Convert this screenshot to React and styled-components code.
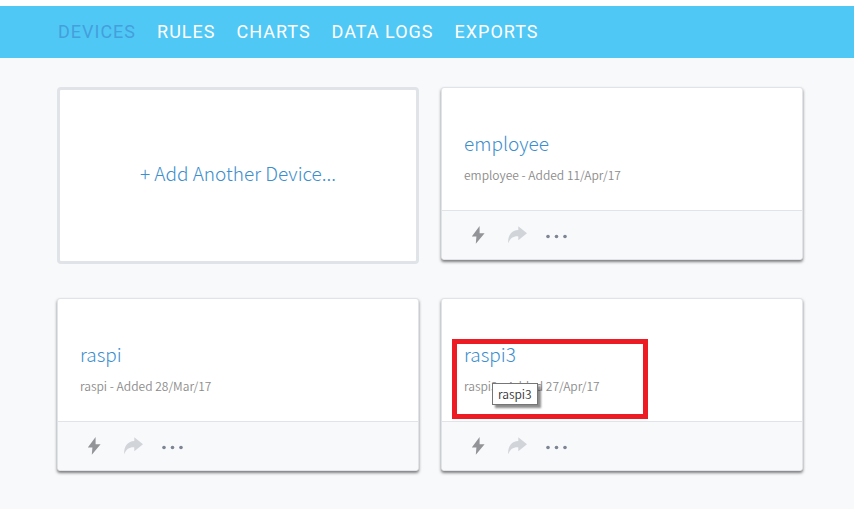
import React from 'react';
import styled, { createGlobalStyle } from 'styled-components';

const GlobalStyle = createGlobalStyle`
  * {
    box-sizing: border-box;
  }

  body {
    margin: 0;
    background: #f8f9fb;
    font-family: 'Noto Sans CJK JP', 'Noto Sans', sans-serif;
  }
`;

const Page = styled.div`
  border-top: 6px solid #fff;
`;

const NavBar = styled.nav`
  display: flex;
  align-items: center;
  gap: 21px;
  height: 52px;
  padding-left: 58px;
  background: #50c8f6;
`;

const NavLink = styled.a`
  color: ${({ $active }) => ($active ? '#449fdb' : '#fff')};
  font-family: Roboto, sans-serif;
  font-size: 18px;
  line-height: 24px;
  letter-spacing: 1px;
  text-decoration: none;
  white-space: nowrap;
`;

const DeviceGrid = styled.main`
  display: grid;
  grid-template-columns: 1fr 1fr;
  align-items: start;
  gap: 34px 22px;
  padding: 29px 51px 34px 57px;
`;

const AddCard = styled.button`
  height: 177px;
  padding: 0 0 6px;
  border: 3px solid #e0e3e7;
  border-radius: 4px;
  background: #fff;
  color: #3c8ecd;
  font-family: inherit;
  font-size: 19px;
  font-weight: 300;
  line-height: 28px;
  cursor: pointer;
`;

const Card = styled.article`
  border: 1px solid #e0e3e7;
  border-radius: 3px;
  background: #fff;
  box-shadow: 0 2px 3px rgba(0, 0, 0, 0.5);
`;

const CardBody = styled.div`
  position: relative;
  height: 122px;
  padding: 41px 22px 0;
`;

const DeviceName = styled.h2`
  margin: 0;
  font-size: 19px;
  font-weight: 300;
  line-height: 28px;
`;

const DeviceLink = styled.a`
  color: #3c8ecd;
  text-decoration: none;
`;

const DeviceInfo = styled.p`
  margin: 8px 0 0;
  color: #8c8c8c;
  font-size: 12px;
  font-weight: 350;
  line-height: 20px;
`;

const CardFooter = styled.div`
  display: flex;
  align-items: center;
  gap: 18px;
  height: 49px;
  padding-left: 25px;
  border-top: 1px solid #e0e3e7;
  border-radius: 0 0 3px 3px;
  background: #f8f9fb;
`;

const IconButton = styled.button`
  display: flex;
  padding: 0;
  border: 0;
  background: none;
  color: ${({ $color }) => $color};
  cursor: pointer;
`;

const Highlight = styled.div`
  position: absolute;
  top: 40px;
  left: 10px;
  width: 196px;
  height: 80px;
  border: 5px solid #ed1c24;
`;

const Tooltip = styled.div`
  position: absolute;
  top: 84px;
  left: 50px;
  padding: 0 5px;
  border: 1px solid #767676;
  background: #fff;
  box-shadow: 3px 3px 2px rgba(0, 0, 0, 0.45);
  color: #333;
  font-size: 12px;
  font-weight: 350;
  line-height: 20px;
`;

const BoltIcon = () => (
  <svg width="22" height="20" viewBox="0 0 22 20" fill="currentColor" aria-hidden="true">
    <path d="M12.6 1 4.8 11.4h4.6L8.8 18.8 17.6 8.2h-5z" />
  </svg>
);

const ShareIcon = () => (
  <svg width="20" height="20" viewBox="0 0 20 20" fill="currentColor" aria-hidden="true">
    <path d="M11.3 1.3 20 8.3l-8.7 7v-3.900C6.800 11 3.400 12.800 1.200 18.300 .6 11 4.200 5.300 11.300 5z" />
  </svg>
);

const MoreIcon = () => (
  <svg width="24" height="20" viewBox="0 0 24 20" fill="currentColor" aria-hidden="true">
    <circle cx="3" cy="11.5" r="1.8" />
    <circle cx="11.5" cy="11.5" r="1.8" />
    <circle cx="20" cy="11.5" r="1.8" />
  </svg>
);

const links = ['DEVICES', 'RULES', 'CHARTS', 'DATA LOGS', 'EXPORTS'];

const devices = [
  { name: 'employee', added: '11/Apr/17' },
  { name: 'raspi', added: '28/Mar/17' },
  { name: 'raspi3', added: '27/Apr/17', highlighted: true },
];

const DeviceCard = ({ name, added, highlighted }) => (
  <Card>
    <CardBody>
      <DeviceName>
        <DeviceLink href="#device">{name}</DeviceLink>
      </DeviceName>
      <DeviceInfo>
        {name} - Added {added}
      </DeviceInfo>
      {highlighted && <Highlight />}
      {highlighted && <Tooltip role="tooltip">{name}</Tooltip>}
    </CardBody>
    <CardFooter>
      <IconButton type="button" aria-label="Triggers" $color="#929497">
        <BoltIcon />
      </IconButton>
      <IconButton type="button" aria-label="Share" $color="#d1d4d9">
        <ShareIcon />
      </IconButton>
      <IconButton type="button" aria-label="More" $color="#7c8593">
        <MoreIcon />
      </IconButton>
    </CardFooter>
  </Card>
);

const App = () => (
  <Page>
    <GlobalStyle />
    <NavBar>
      {links.map((label, i) => (
        <NavLink key={label} href="#nav" $active={i === 0}>
          {label}
        </NavLink>
      ))}
    </NavBar>
    <DeviceGrid>
      <AddCard type="button">+ Add Another Device...</AddCard>
      {devices.map(device => (
        <DeviceCard key={device.name} {...device} />
      ))}
    </DeviceGrid>
  </Page>
);

export default App;
